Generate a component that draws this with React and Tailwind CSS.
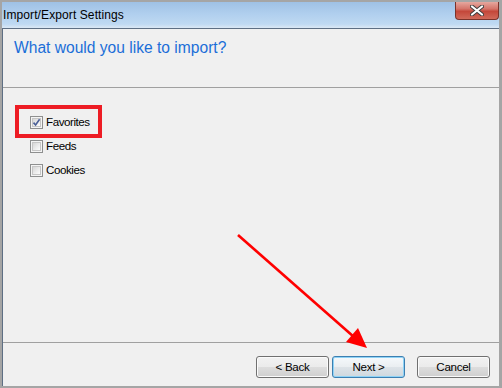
import React from 'react';

const uiFont = { fontFamily: '"Liberation Sans", Arial, sans-serif' };

const Checkbox = ({ checked }) => (
  <div className="w-[13px] h-[13px] border border-[#8e8f8f] bg-[#f4f4f4] p-[1px] flex-shrink-0">
    <div className="relative w-full h-full border border-[#c6c6c6] bg-[linear-gradient(135deg,#d6d6d6_0%,#eeeeee_60%,#fbfbfb_100%)]">
      {checked && (
        <svg viewBox="0 0 9 9" className="absolute -left-[1px] -top-[1px] w-[9px] h-[9px]">
          <path d="M1.5 4.6 L3.6 7 L7.6 1.2" fill="none" stroke="#4a5f97" strokeWidth="1.6" />
        </svg>
      )}
    </div>
  </div>
);

const Option = ({ label, checked }) => (
  <div className="h-[24px] flex items-center gap-[3px]">
    <Checkbox checked={checked} />
    <span className="text-[11.6px] text-black tracking-[-0.45px]">{label}</span>
  </div>
);

const WinButton = ({ children, primary }) => (
  <div
    className={
      'w-[73px] h-[22px] rounded-[3px] border flex items-center justify-center text-[11.6px] tracking-[-0.3px] text-black ' +
      (primary
        ? 'border-[#3c7fb1] shadow-[inset_0_0_0_1px_#8fd3f6] bg-[linear-gradient(to_bottom,#f5f9fc_0%,#eaeef1_50%,#dde3e8_51%,#cfd8de_100%)]'
        : 'border-[#707070] shadow-[inset_0_0_0_1px_#fbfbfb] bg-[linear-gradient(to_bottom,#f2f2f2_0%,#ebebeb_50%,#dddddd_51%,#cfcfcf_100%)]')
    }
  >
    {children}
  </div>
);

export default function App() {
  return (
    <div className="relative w-[502px] h-[388px] bg-[#a5a5a5] pt-[2px] pl-[2px] pr-[3px] pb-[2px] flex flex-col overflow-hidden" style={uiFont}>
      {/* title bar */}
      <div className="relative h-[26px] flex items-center bg-[linear-gradient(to_bottom,#9fc1e5_0%,#b0cfee_45%,#bfd9f2_85%,#dbe8f5_100%)]">
        <span className="pl-[1px] text-[12px] text-black tracking-[0.1px]">Import/Export Settings</span>
        <div className="absolute right-0 top-0 w-[44px] h-[18px] rounded-b-[4px] border border-t-0 border-[#7a332b] bg-[linear-gradient(to_bottom,#e6a79e_0%,#d5756a_40%,#c4473a_55%,#d06a5a_100%)] flex items-center justify-center">
          <svg viewBox="0 0 14 11" className="w-[14px] h-[11px]">
            <path d="M2 1.5 L12 9.5 M12 1.5 L2 9.5" stroke="#3d3d3d" strokeWidth="4" strokeLinecap="round" />
            <path d="M2 1.5 L12 9.5 M12 1.5 L2 9.5" stroke="#ffffff" strokeWidth="2.2" strokeLinecap="round" />
          </svg>
        </div>
      </div>

      {/* client area */}
      <div className="flex-1 flex flex-col bg-[#f0f0f0] border-l border-t border-[#5e6f84]">
        <div className="h-[59px] border-b border-[#a0a0a0] pl-[11px] pt-[9px]">
          <h1 className="text-[15.6px] text-[#1b6ed8] leading-[20px]">What would you like to import?</h1>
        </div>

        <div className="relative flex-1 pt-[22px] pl-[27px]">
          <Option label="Favorites" checked />
          <Option label="Feeds" />
          <Option label="Cookies" />
          <div className="absolute left-[12px] top-[17px] w-[87px] h-[33px] border-[4px] border-[#ed1c24]" />
        </div>

        <div className="h-[44px] border-t border-[#a0a0a0] flex justify-end items-start pt-[13px] pr-[9px]">
          <WinButton>&lt; Back</WinButton>
          <div className="ml-[3px]">
            <WinButton primary>Next &gt;</WinButton>
          </div>
          <div className="ml-[12px]">
            <WinButton>Cancel</WinButton>
          </div>
        </div>
      </div>

      {/* annotation arrow */}
      <svg className="absolute left-0 top-0 w-[502px] h-[388px] pointer-events-none" viewBox="0 0 502 388">
        <line x1="238" y1="235" x2="354" y2="337" stroke="#ff0000" strokeWidth="2.6" />
        <polygon points="367,348 346,342 358,328" fill="#ff0000" />
      </svg>
    </div>
  );
}
